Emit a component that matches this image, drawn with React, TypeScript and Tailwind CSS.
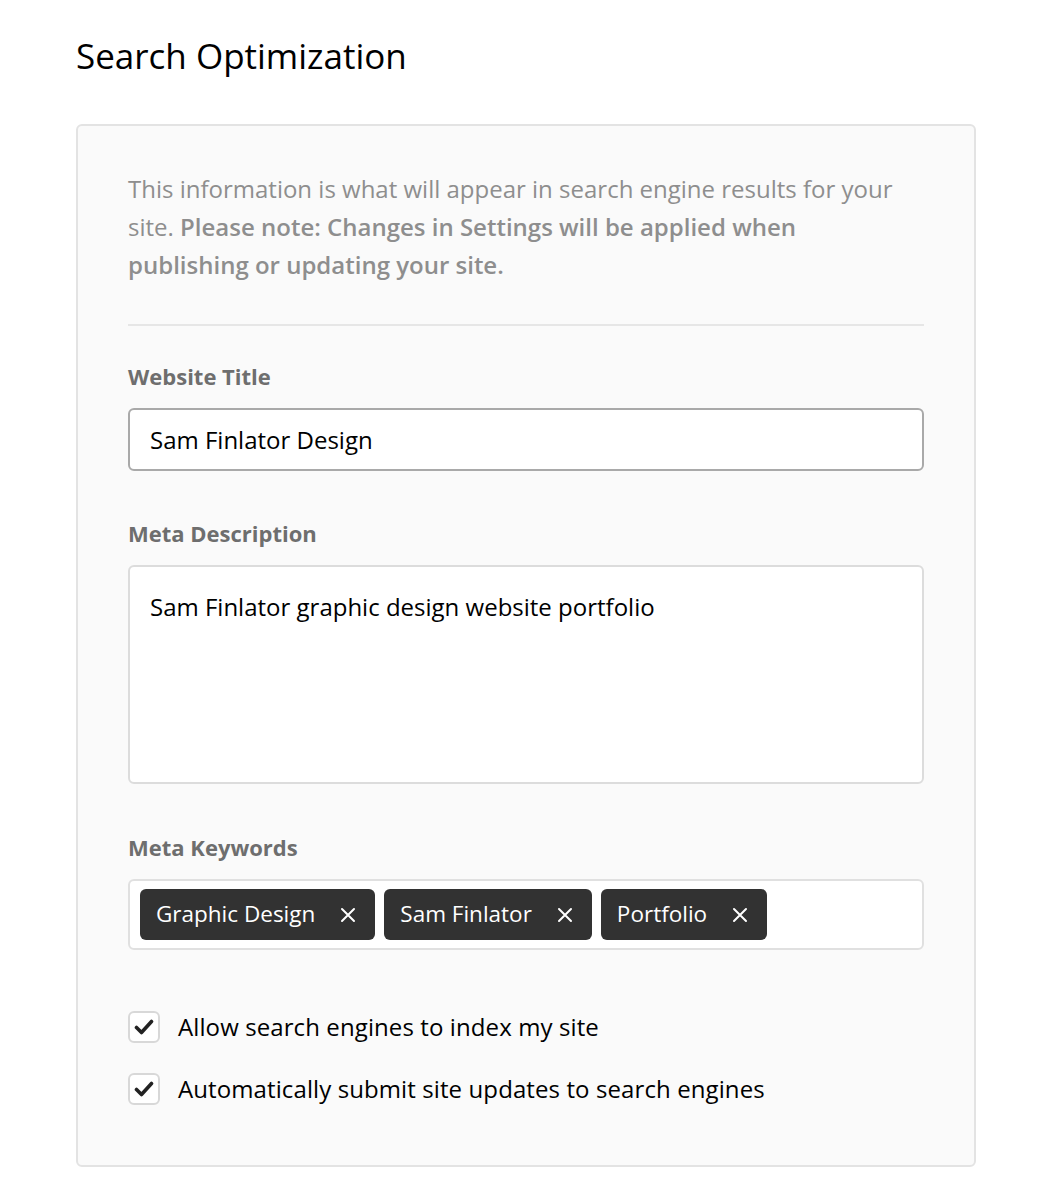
import React from 'react';

const font = { fontFamily: '"Open Sans", Lato, sans-serif' };

// Small field label above each input
const FieldLabel = ({ children }: { children: React.ReactNode }) => (
    <div className="text-[22px] leading-[30px] font-bold text-[#6e6e6e] mb-[17px]">{children}</div>
);

const KeywordTag = ({ label }: { label: string }) => (
    <div className="flex items-center h-[51px] rounded-[6px] bg-[#323232] text-white pl-[16px] pr-[19px] gap-[25px]">
        <span className="text-[22.5px] leading-none">{label}</span>
        <svg width="16" height="16" viewBox="0 0 16 16" fill="none" stroke="white" strokeWidth="2" strokeLinecap="round">
            <path d="M2 2L14 14M14 2L2 14" />
        </svg>
    </div>
);

const CheckRow = ({ label }: { label: string }) => (
    <label className="flex items-center gap-[18px] h-[32px]">
        <span className="flex items-center justify-center w-[32px] h-[32px] rounded-[6px] border-2 border-[#d8d8d8] bg-white">
            <svg width="20" height="16" viewBox="0 0 20 16" fill="none" stroke="#222" strokeWidth="3.6" strokeLinecap="round" strokeLinejoin="round">
                <path d="M2.5 8.5L7.5 13.5L17.5 2.5" />
            </svg>
        </span>
        <span className="text-[24px] leading-none tracking-[0.1px] text-black">{label}</span>
    </label>
);

export default function App() {
    const keywords = ['Graphic Design', 'Sam Finlator', 'Portfolio'];

    return (
        <div className="min-h-screen bg-white pt-[34px] pl-[76px] pr-[64px] pb-[39px]" style={font}>
            <h1 className="text-[35px] leading-[44px] text-black font-normal mb-[46px]">Search Optimization</h1>

            <div className="w-[900px] rounded-[6px] border-2 border-[#e3e3e3] bg-[#fafafa] pt-[44px] pb-[60px] px-[50px]">
                <p className="text-[24px] leading-[38px] text-[#8e8e8e]">
                    This information is what will appear in search engine results for your
                    <br />
                    site. <span className="font-semibold">Please note: Changes in Settings will be applied when</span>
                    <br />
                    <span className="font-semibold">publishing or updating your site.</span>
                </p>

                <div className="h-[2px] bg-[#e6e6e6] mt-[40px] mb-[35px]" />

                <FieldLabel>Website Title</FieldLabel>
                <div className="h-[63px] rounded-[6px] border-2 border-[#a9a9a9] bg-white flex items-center px-[20px]">
                    <span className="text-[24px] text-black">Sam Finlator Design</span>
                </div>

                <div className="mt-[47px]">
                    <FieldLabel>Meta Description</FieldLabel>
                </div>
                <div className="h-[219px] rounded-[6px] border-2 border-[#dcdcdc] bg-white px-[20px] pt-[24px]">
                    <span className="text-[24px] leading-[32px] text-black">Sam Finlator graphic design website portfolio</span>
                </div>

                <div className="mt-[48px]">
                    <FieldLabel>Meta Keywords</FieldLabel>
                </div>
                <div className="h-[71px] mt-[1px] rounded-[6px] border-2 border-[#e0e0e0] bg-white flex items-center gap-[9px] px-[10px]">
                    {keywords.map((k) => (
                        <KeywordTag key={k} label={k} />
                    ))}
                </div>

                <div className="mt-[61px] flex flex-col gap-[30px]">
                    <CheckRow label="Allow search engines to index my site" />
                    <CheckRow label="Automatically submit site updates to search engines" />
                </div>
            </div>
        </div>
    );
}
